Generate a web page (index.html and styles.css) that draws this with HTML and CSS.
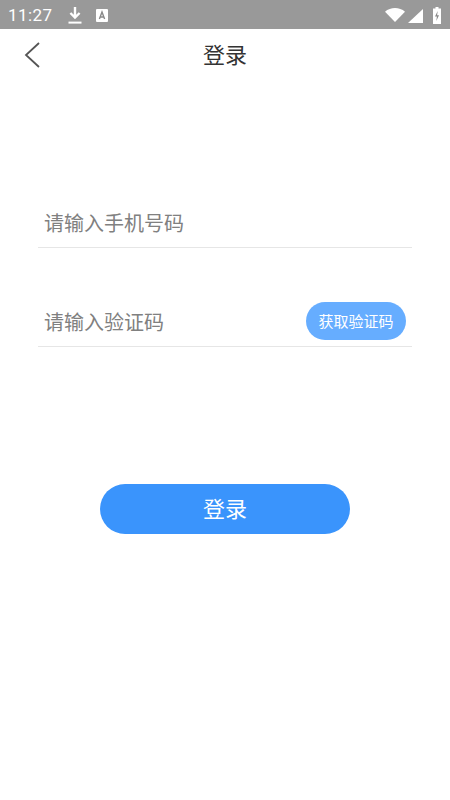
FILE: index.html
```html
<!DOCTYPE html>
<html lang="zh-CN">
<head>
  <meta charset="UTF-8" />
  <meta name="viewport" content="width=device-width, initial-scale=1.0"/>
  <title>登录</title>
  <link rel="stylesheet" href="styles.css">
</head>
<body>
  <div class="status-bar">
    <span class="time">11:27</span>
    <svg class="icon-download" width="14" height="17" viewBox="0 0 14 17">
      <path d="M7 0v10M2.4 6L7 10.6 11.6 6" fill="none" stroke="#fff" stroke-width="2.4"/>
      <rect x="0.5" y="14.6" width="13" height="2" fill="#fff"/>
    </svg>
    <svg class="icon-a" width="12" height="13" viewBox="0 0 12 13">
      <rect width="12" height="13" rx="1" fill="#fff"/>
      <path d="M3.4 10L6 3l2.6 7M4.3 8h3.4" fill="none" stroke="#888" stroke-width="1.4"/>
    </svg>
    <div class="status-right">
      <svg class="icon-wifi" width="20" height="14" viewBox="0 0 20 14"><path d="M0 3.8C5.5-1.2 14.5-1.2 20 3.8L10 14z" fill="#fff"/></svg>
      <svg class="icon-signal" width="15" height="14" viewBox="0 0 15 14"><path d="M15 0v14H0z" fill="#fff"/></svg>
      <svg class="icon-battery" width="8" height="17" viewBox="0 0 8 17">
        <path d="M2.5 0h3v1.5H8V17H0V1.5h2.5z" fill="#fff"/>
        <path d="M4.7 4L2 9.6h1.9L3.3 14 6 8.2H4.1z" fill="#888"/>
      </svg>
    </div>
  </div>

  <div class="nav-bar">
    <svg class="back" width="16" height="26" viewBox="0 0 16 26">
      <path d="M15 1L2 13 15 25" fill="none" stroke="#555" stroke-width="1.8"/>
    </svg>
    <div class="nav-title">登录</div>
  </div>

  <div class="form">
    <div class="field">
      <span class="placeholder">请输入手机号码</span>
    </div>
    <div class="field">
      <span class="placeholder">请输入验证码</span>
      <div class="code-button">获取验证码</div>
    </div>
  </div>

  <div class="login-button">登录</div>
</body>
</html>
```

FILE: styles.css
```css
body {
  margin: 0;
  height: 800px;
  overflow: hidden;
  background: #fff;
  font-family: "Noto Sans CJK SC", "Noto Sans", sans-serif;
}
.status-bar {
  display: flex;
  align-items: center;
  height: 29px;
  padding: 0 9px 0 8px;
  background: #999;
  color: #fff;
}
.time {
  font-family: Roboto, sans-serif;
  font-size: 17px;
  letter-spacing: 0.4px;
  width: 60px;
}
.icon-download {
  margin-top: 1px;
}
.icon-a {
  margin-left: 14px;
  margin-top: 2px;
}
.status-right {
  display: flex;
  align-items: center;
  margin-left: auto;
}
.icon-wifi {
  margin-top: 1px;
}
.icon-signal {
  margin: 3px 0 0 3px;
}
.icon-battery {
  margin-left: 10px;
  margin-top: 1px;
}
.nav-bar {
  position: relative;
  display: flex;
  align-items: center;
  justify-content: center;
  height: 52px;
}
.back {
  position: absolute;
  left: 24px;
  top: 13px;
}
.nav-title {
  font-size: 22px;
  color: #333;
  margin-bottom: 4px;
}
.form {
  margin: 105px 38px 0;
}
.field {
  display: flex;
  align-items: center;
  justify-content: space-between;
  height: 61px;
  margin-bottom: 37px;
  padding: 0 6px;
  border-bottom: 1px solid #e6e6e6;
}
.placeholder {
  font-size: 20px;
  color: #808080;
  position: relative;
  top: 6px;
}
.code-button {
  display: flex;
  align-items: center;
  justify-content: center;
  width: 100px;
  height: 38px;
  border-radius: 19px;
  background: #66adff;
  color: #fff;
  font-size: 15px;
  position: relative;
  top: 5px;
}
.login-button {
  display: flex;
  align-items: center;
  justify-content: center;
  box-sizing: border-box;
  width: 250px;
  height: 50px;
  margin: 137px auto 0;
  padding-bottom: 4px;
  border-radius: 25px;
  background: #3a94fc;
  color: #fff;
  font-size: 22px;
}
```
